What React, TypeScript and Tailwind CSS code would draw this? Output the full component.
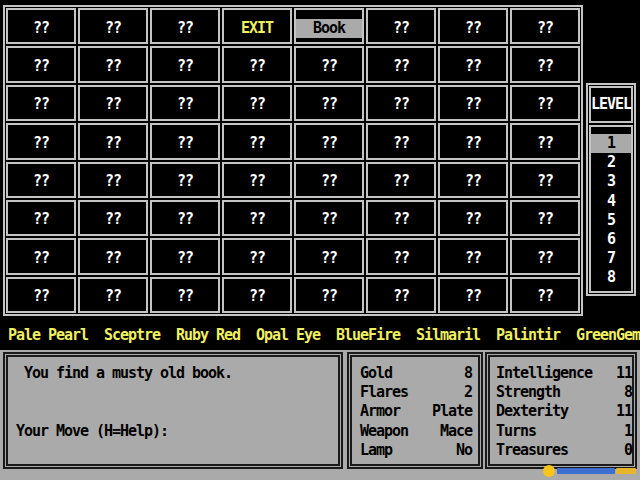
import React from 'react';

const mono = "font-['DejaVu_Sans_Mono',monospace] font-bold text-[15px] tracking-[-1.03px]";

const cells = Array.from({ length: 64 }, (_, i) => (i === 3 ? 'EXIT' : i === 4 ? 'Book' : '??'));

const treasures = ' Pale Pearl  Sceptre  Ruby Red  Opal Eye  BlueFire  Silmaril  Palintir  GreenGem';

const inventory = [
  ['Gold', '8'],
  ['Flares', '2'],
  ['Armor', 'Plate'],
  ['Weapon', 'Mace'],
  ['Lamp', 'No'],
];

const stats = [
  ['Intelligence', '11'],
  ['Strength', '8'],
  ['Dexterity', '11'],
  ['Turns', '1'],
  ['Treasures', '0'],
];

const Cell = ({ label }: { label: string }) => {
  return (
    <div className="m-px border-2 border-[#c4c4c4] flex items-center justify-center pt-[4px] leading-[19.2px]">
      {label === 'Book' ? (
        <div className="w-full h-[19.2px] bg-[#aaaaaa] text-black text-center">Book</div>
      ) : label === 'EXIT' ? (
        <span className="text-[#f0f060]">EXIT</span>
      ) : (
        <span className="text-white">{label}</span>
      )}
    </div>
  );
};

const StatRow = ({ name, value }: { name: string; value: string }) => (
  <div className="flex justify-between h-[19.2px] leading-[19.2px] whitespace-pre">
    <span>{name}</span>
    <span>{value}</span>
  </div>
);

export default function App() {
  return (
    <div className={`w-[640px] h-[480px] bg-black overflow-hidden flex flex-col ${mono}`}>
      <div className="h-[326px] flex items-start">
        <div className="ml-[3px] mt-[5px] w-[580px] h-[311px] border-2 border-[#c4c4c4] grid grid-cols-8 grid-rows-8">
          {cells.map((c, i) => (
            <Cell key={i} label={c} />
          ))}
        </div>

        <div className="ml-[3px] mt-[83px] w-[50px] h-[213px] border-2 border-[#c4c4c4] flex flex-col">
          <div className="m-px h-[37px] border-2 border-[#c4c4c4] flex items-center justify-center text-white">
            LEVEL
          </div>
          <div className="m-px flex-1 border-2 border-[#c4c4c4] pt-[7px] text-white">
            {[1, 2, 3, 4, 5, 6, 7, 8].map((n) => (
              <div
                key={n}
                className={`h-[19.2px] leading-[19.2px] text-center ${n === 1 ? 'bg-[#aaaaaa] text-black' : ''}`}
              >
                {n}
              </div>
            ))}
          </div>
        </div>
      </div>

      <div className="h-[24px] leading-[19.2px] text-[#f0f060] whitespace-pre">{treasures}</div>

      <div className="relative h-[130px] bg-[#aaaaaa] text-black flex items-start pt-[2px] pl-[3px]">
        <div className="w-[340px] h-[117px] border-[5px] border-double border-[#1a1a1a] pt-[7px] leading-[19.2px]">
          <div className="h-[19.2px] pl-[16px]">You find a musty old book.</div>
          <div className="h-[19.2px]" />
          <div className="h-[19.2px]" />
          <div className="h-[19.2px] pl-[8px]">Your Move (H=Help):</div>
        </div>

        <div className="ml-[4px] w-[136px] h-[117px] border-[5px] border-double border-[#1a1a1a] pt-[7px] pl-[8px] pr-[6px]">
          {inventory.map(([k, v]) => (
            <StatRow key={k} name={k} value={v} />
          ))}
        </div>

        <div className="ml-[2px] w-[152px] h-[117px] border-[5px] border-double border-[#1a1a1a] pt-[7px] pl-[6px]">
          {stats.map(([k, v]) => (
            <StatRow key={k} name={k} value={v} />
          ))}
        </div>

        {/* watermark */}
        <div className="absolute right-[4px] bottom-[2px] flex items-center gap-[1px]">
          <svg width="14" height="14" viewBox="0 0 14 14">
            <circle cx="7" cy="7" r="6" fill="#f5c518" />
          </svg>
          <div className="w-[58px] h-[6px] bg-[#3d6fd1] rounded-[1px]" />
          <div className="w-[20px] h-[6px] bg-[#e8b42a] rounded-[1px]" />
        </div>
      </div>
    </div>
  );
}
